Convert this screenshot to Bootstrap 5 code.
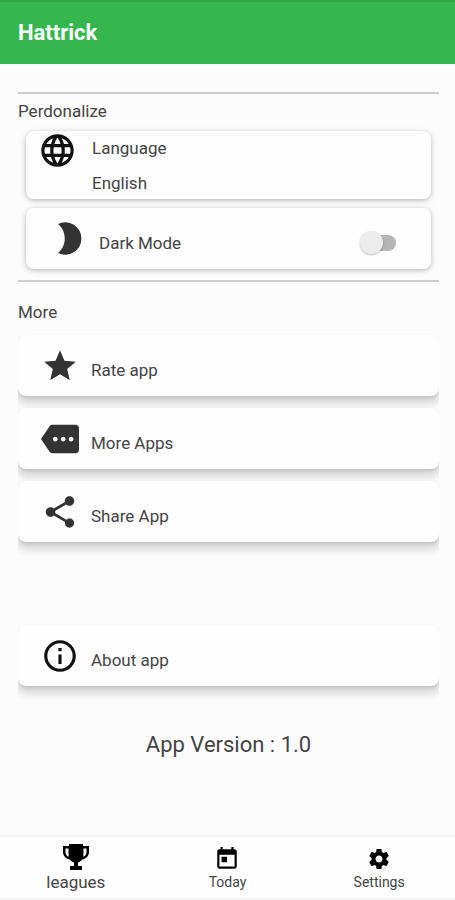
<!DOCTYPE html>
<html lang="en">
<head>
<meta charset="utf-8">
<meta name="viewport" content="width=device-width, initial-scale=1">
<title>Hattrick</title>
<link href="https://cdn.jsdelivr.net/npm/bootstrap@5.3.0/dist/css/bootstrap.min.css" rel="stylesheet">
<style>
body { font-family: Roboto, "Noto Sans", sans-serif; font-size: 17px; line-height: 24px; color: #444; background: #fcfcfc; }
svg { display: block; flex: none; fill: currentColor; }
.app-bar { background: #36b64e; border-top: 2px solid #2fa846; padding: 16px 18px; height: 64px; }
.app-title { font-size: 22px; font-weight: 700; line-height: 30px; color: #fff; }
.page-body { padding: 28px 16px 0 18px; }
.rule { height: 2px; margin: 0; border: 0; background: #cdcdcd; opacity: 1; }
.group-title { font-size: 17px; font-weight: 400; line-height: 24px; margin: 0; color: #444; }
.option, .action { background: #fdfdfd; border: 0; border-radius: 8px; color: #444; }
.option { box-shadow: 0 1px 4px rgba(0,0,0,.2), 0 2px 8px rgba(0,0,0,.1); }
.personal-title { padding-top: 5px; }
.options { padding: 8px 8px 11px; gap: 9px; }
.option-language { height: 68px; padding: 0 12px; gap: 15px; }
.option-language .lines { line-height: 35px; }
.option-dark { height: 61px; padding: 0 35px 0 32px; gap: 17px; }
.ink { color: #333; }
.ink-dark { color: #111; }
/* Row shadows stop at the list's side edges */
.actions { gap: 12px; overflow-x: clip; }
.action { height: 61px; padding: 0 23px; gap: 12px; box-shadow: 0 2px 3px rgba(0,0,0,.1), 0 7px 8px 1px rgba(0,0,0,.15); }
.action .caption { padding-top: 8px; }
.more-title { margin: 18px 0 11px; }
.about { margin-top: 83px; }
.toggle { appearance: none; position: relative; width: 32px; height: 16px; margin: 0; border-radius: 8px; background: #b5b5b5; }
.toggle::before { content: ""; position: absolute; left: -4px; top: -4px; width: 23px; height: 23px; border-radius: 50%; background: #ececec; box-shadow: 0 1px 2px rgba(0,0,0,.25); }
.toggle:checked::before { left: 13px; }
.version { font-size: 22px; line-height: 30px; margin: 44px 0 24px; }
.tabs { background: #fefefe; border-top: 2px solid #f5f5f5; border-bottom: 2px solid #f5f5f5; height: 65px; }
.tab { color: #444; font-size: 14px; line-height: 20px; padding-bottom: 6px; }
.tab svg { color: #000; }
.tab-active { font-size: 17px; }
</style>
<script src="https://cdn.jsdelivr.net/npm/bootstrap@5.3.0/dist/js/bootstrap.bundle.min.js"></script>
</head>
<body class="min-vh-100 d-flex flex-column">
<header class="app-bar d-flex align-items-center">
  <h1 class="app-title m-0">Hattrick</h1>
</header>
<main class="page-body flex-grow-1">
  <hr class="rule">
  <section>
    <h2 class="group-title personal-title">Perdonalize</h2>
    <div class="options d-flex flex-column">
      <button type="button" class="option option-language d-flex align-items-start text-start">
        <svg class="ink-dark" width="39" height="39" viewBox="0 0 24 24" aria-hidden="true"><path d="M11.99 2C6.47 2 2 6.48 2 12s4.47 10 9.99 10C17.52 22 22 17.52 22 12S17.52 2 11.99 2zm6.93 6h-2.95c-.32-1.25-.78-2.45-1.38-3.56 1.84.63 3.37 1.91 4.33 3.56zM12 4.04c.83 1.2 1.48 2.53 1.91 3.96h-3.82c.43-1.43 1.08-2.76 1.91-3.96zM4.26 14C4.1 13.36 4 12.69 4 12s.1-1.36.26-2h3.38c-.08.66-.14 1.32-.14 2s.06 1.34.14 2H4.26zm.82 2h2.95c.32 1.25.78 2.45 1.38 3.56-1.84-.63-3.37-1.9-4.33-3.56zm2.95-8H5.08c.96-1.66 2.49-2.93 4.33-3.56C8.81 5.55 8.35 6.75 8.03 8zM12 19.96c-.83-1.2-1.48-2.53-1.91-3.96h3.82c-.43 1.43-1.08 2.76-1.91 3.96zM14.34 14H9.66c-.09-.66-.16-1.32-.16-2s.07-1.35.16-2h4.68c.09.65.16 1.32.16 2s-.07 1.34-.16 2zm.25 5.56c.6-1.11 1.06-2.31 1.38-3.56h2.95c-.96 1.65-2.49 2.93-4.33 3.56zM16.36 14c.08-.66.14-1.32.14-2s-.06-1.34-.14-2h3.38c.16.64.26 1.31.26 2s-.1 1.36-.26 2h-3.38z"/></svg>
        <span class="lines d-flex flex-column"><span>Language</span><span>English</span></span>
      </button>
      <div class="option option-dark d-flex align-items-center">
        <svg class="ink" width="24" height="33" viewBox="0 0 24 33" aria-hidden="true"><path d="M0 2A16.2 16.2 0 1 1 0 31C9 24 9 9 0 2z"/></svg>
        <label class="flex-grow-1 pt-2" for="dark-mode">Dark Mode</label>
        <input class="toggle mt-2" type="checkbox" role="switch" id="dark-mode">
      </div>
    </div>
  </section>
  <hr class="rule">
  <section>
    <h2 class="group-title more-title">More</h2>
    <div class="actions d-flex flex-column">
      <button type="button" class="action d-flex align-items-center">
        <svg class="ink" width="38" height="38" viewBox="0 0 24 24" aria-hidden="true"><path d="M12 17.27 18.18 21l-1.64-7.03L22 9.24l-7.19-.61L12 2 9.19 8.63 2 9.24l5.46 4.73L5.82 21z"/></svg>
        <span class="caption">Rate app</span>
      </button>
      <button type="button" class="action d-flex align-items-center">
        <svg class="ink" width="38" height="38" viewBox="0 0 24 24" aria-hidden="true"><path d="M22 3H7c-.69 0-1.23.35-1.59.88L0 12l5.41 8.11c.36.53.97.89 1.66.89H22c1.1 0 2-.9 2-2V5c0-1.1-.9-2-2-2zM9 13.5c-.83 0-1.5-.67-1.5-1.5s.67-1.5 1.5-1.5 1.5.67 1.5 1.5-.67 1.5-1.5 1.5zm5 0c-.83 0-1.5-.67-1.5-1.5s.67-1.5 1.5-1.5 1.5.67 1.5 1.5-.67 1.5-1.5 1.5zm5 0c-.83 0-1.5-.67-1.5-1.5s.67-1.5 1.5-1.5 1.5.67 1.5 1.5-.67 1.5-1.5 1.5z"/></svg>
        <span class="caption">More Apps</span>
      </button>
      <button type="button" class="action d-flex align-items-center">
        <svg class="ink" width="38" height="38" viewBox="0 0 24 24" aria-hidden="true"><path d="M18 16.08c-.76 0-1.44.3-1.96.77L8.91 12.7c.05-.23.09-.46.09-.7s-.04-.47-.09-.7l7.05-4.11c.54.5 1.25.81 2.04.81 1.66 0 3-1.34 3-3s-1.34-3-3-3-3 1.34-3 3c0 .24.04.47.09.7L8.04 9.81C7.5 9.31 6.79 9 6 9c-1.66 0-3 1.34-3 3s1.34 3 3 3c.79 0 1.5-.31 2.04-.81l7.12 4.16c-.05.21-.08.43-.08.65 0 1.61 1.31 2.92 2.92 2.92s2.92-1.31 2.92-2.92-1.31-2.92-2.92-2.92z"/></svg>
        <span class="caption">Share App</span>
      </button>
    </div>
  </section>
  <section class="actions about d-flex flex-column">
    <button type="button" class="action d-flex align-items-center">
      <svg class="ink-dark" width="38" height="38" viewBox="0 0 24 24" aria-hidden="true"><path d="M11 17h2v-6h-2v6zm1-15C6.48 2 2 6.48 2 12s4.48 10 10 10 10-4.48 10-10S17.52 2 12 2zm0 18c-4.41 0-8-3.59-8-8s3.59-8 8-8 8 3.59 8 8-3.59 8-8 8zM11 9h2V7h-2v2z"/></svg>
      <span class="caption">About app</span>
    </button>
  </section>
  <p class="version text-center">App Version : 1.0</p>
</main>
<nav class="tabs d-flex" aria-label="Main">
  <a href="#leagues" class="tab tab-active d-flex flex-column align-items-center justify-content-end text-decoration-none col-4">
    <svg width="26" height="28" viewBox="0 0 26 28" aria-hidden="true"><path d="M6 0h14v2h6v6c0 4-3 7-7 7.500-1 1.500-2.500 2.500-4 3V22h4v4H7v-4h4v-3.500c-1.500-.5-3-1.500-4-3C3 15 0 12 0 8V2h6zM2.500 4.500V8c0 2.500 1.200 4 3.300 4.800C5.400 11 5.500 7 5.500 4.500zm21 0h-3c0 2.500.1 6.500-.3 8.300 2.100-.8 3.300-2.300 3.300-4.800z" fill-rule="evenodd"/></svg>
    <span>leagues</span>
  </a>
  <a href="#today" class="tab d-flex flex-column align-items-center justify-content-end text-decoration-none col-4">
    <svg width="26" height="26" viewBox="0 0 24 24" aria-hidden="true"><path d="M19 3h-1V1h-2v2H8V1H6v2H5c-1.110 0-1.990.9-1.990 2L3 19c0 1.100.89 2 2 2h14c1.100 0 2-.9 2-2V5c0-1.100-.9-2-2-2zm0 16H5V8h14v11zM7 10h5v5H7z"/></svg>
    <span>Today</span>
  </a>
  <a href="#settings" class="tab d-flex flex-column align-items-center justify-content-end text-decoration-none col-4">
    <svg width="26" height="26" viewBox="-1 -1 26 26" aria-hidden="true"><path d="M19.430 12.980c.04-.32.07-.64.07-.98s-.03-.66-.07-.98l2.110-1.650c.19-.15.24-.42.12-.64l-2-3.460c-.12-.22-.39-.3-.61-.22l-2.490 1c-.52-.4-1.080-.73-1.690-.98l-.38-2.650C14.460 2.180 14.250 2 14 2h-4c-.25 0-.46.18-.49.42l-.38 2.650c-.61.25-1.170.59-1.690.98l-2.490-1c-.23-.09-.49 0-.61.22l-2 3.460c-.13.22-.07.49.12.64l2.110 1.650c-.04.32-.07.65-.07.98s.03.66.07.98l-2.110 1.650c-.19.15-.24.42-.12.64l2 3.460c.12.22.39.3.61.22l2.490-1c.52.4 1.080.73 1.690.98l.38 2.650c.03.24.24.42.49.42h4c.25 0 .46-.18.49-.42l.38-2.650c.61-.25 1.170-.59 1.690-.98l2.490 1c.23.09.49 0 .61-.22l2-3.460c.12-.22.07-.49-.12-.64l-2.110-1.650zM12 15.500c-1.930 0-3.500-1.570-3.500-3.500s1.570-3.500 3.500-3.500 3.500 1.570 3.500 3.500-1.570 3.500-3.500 3.500z"/></svg>
    <span>Settings</span>
  </a>
</nav>
</body>
</html>
